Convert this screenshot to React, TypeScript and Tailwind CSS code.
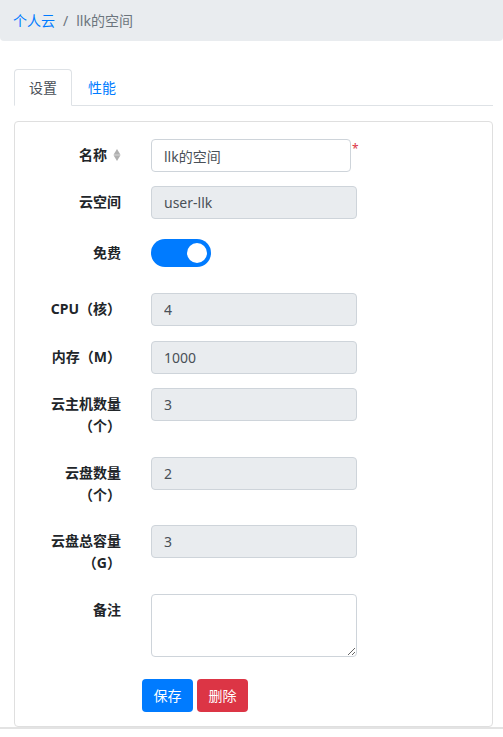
import React from "react";

const fields = [
  { label: "CPU（核）", value: "4" },
  { label: "内存（M）", value: "1000" },
  { label: "云主机数量（个）", value: "3" },
  { label: "云盘数量（个）", value: "2" },
  { label: "云盘总容量（G）", value: "3" },
];

const SortIcon = () => (
  <svg width="8" height="12" viewBox="0 0 8 12" className="inline-block ml-[6px] -mt-[2px]">
    <path d="M4 0 L7.5 5.8 L0.5 5.8 Z" fill="#b0b0b0" />
    <path d="M4 12 L7.5 6.2 L0.5 6.2 Z" fill="#b0b0b0" />
  </svg>
);

const Label = ({ children, className = "" }: { children: React.ReactNode; className?: string }) => (
  <div
    className={`ml-[32px] w-[74px] shrink-0 text-right font-bold text-[14px] leading-[22px] text-[#212529] ${className}`}
  >
    {children}
  </div>
);

const App = () => {
  return (
    <div className="min-h-screen bg-white font-['Noto_Sans','Noto_Sans_CJK_SC',sans-serif] text-[14px] text-[#212529]">
      {/* breadcrumb */}
      <div className="flex h-[41px] items-center rounded-b bg-[#e9ecef] px-[13px] text-[14px]">
        <span className="text-[#007bff]">个人云</span>
        <span className="px-[8px] text-[#6c757d]">/</span>
        <span className="text-[#6c757d]">llk的空间</span>
      </div>

      <div className="border-b-2 border-[#e3e3e3]">
        <div className="ml-[14px] w-[479px] pt-[28px]">
          {/* tabs */}
          <div className="flex border-b border-[#dee2e6]">
            <div className="-mb-px flex h-[37px] items-center rounded-t border border-[#dee2e6] border-b-white bg-white px-[14px] text-[#495057]">
              设置
            </div>
            <div className="flex h-[36px] items-center px-[16px] text-[#007bff]">性能</div>
          </div>

          {/* card */}
          <div className="mt-[15px] rounded border border-[#dfdfdf] pt-[17px] pb-[14px]">
            <div className="mb-[14px] flex">
              <Label className="py-[5px]">
                名称
                <SortIcon />
              </Label>
              <div className="ml-[30px] flex">
                <input
                  readOnly
                  value="llk的空间"
                  className="h-[33px] w-[200px] rounded border border-[#ced4da] bg-white px-[12px] text-[14px] text-[#495057] outline-none"
                />
                <span className="ml-[1px] mt-[4px] text-[12px] leading-none text-[#dc3545]">*</span>
              </div>
            </div>

            <div className="mb-[14px] flex">
              <Label className="py-[5px]">云空间</Label>
              <input
                readOnly
                value="user-llk"
                className="ml-[30px] h-[33px] w-[206px] rounded border border-[#ced4da] bg-[#e9ecef] px-[12px] text-[14px] text-[#495057] outline-none"
              />
            </div>

            <div className="mb-[14px] flex h-[46px] pt-[6px]">
              <Label className="py-[3px]">免费</Label>
              <div className="ml-[30px] flex h-[28px] w-[60px] items-center justify-end rounded-full bg-[#007bff] pr-[4px]">
                <div className="h-[20px] w-[20px] rounded-full bg-white" />
              </div>
            </div>

            {fields.map((f) => (
              <div key={f.label} className="mb-[14.5px] flex items-start">
                <Label className="py-[5px]">{f.label}</Label>
                <input
                  readOnly
                  value={f.value}
                  className="ml-[30px] h-[33px] w-[206px] rounded border border-[#ced4da] bg-[#e9ecef] px-[12px] text-[14px] text-[#495057] outline-none"
                />
              </div>
            ))}

            <div className="flex">
              <Label className="py-[5px]">备注</Label>
              <textarea className="ml-[30px] h-[63px] w-[206px] rounded border border-[#ced4da] bg-white px-[12px] py-[6px] text-[14px] outline-none" />
            </div>

            <div className="mt-[22px] ml-[127px] flex gap-[4px]">
              <button className="h-[33px] w-[51px] rounded bg-[#007bff] text-[14px] text-white">保存</button>
              <button className="h-[33px] w-[51px] rounded bg-[#dc3545] text-[14px] text-white">删除</button>
            </div>
          </div>
        </div>
      </div>
    </div>
  );
};

export default App;
